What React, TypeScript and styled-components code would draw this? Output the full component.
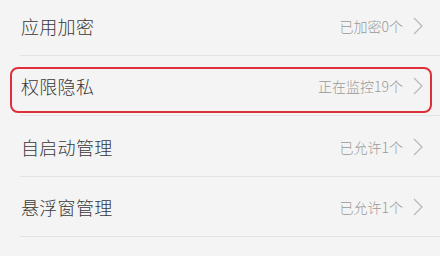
import React from "react";
import styled, { createGlobalStyle } from "styled-components";

const GlobalStyle = createGlobalStyle`
	html, body {
		margin: 0;
		padding: 0;
		background: #f4f4f4;
	}
	body {
		font-family: "Noto Sans CJK SC", "Noto Sans", sans-serif;
	}
`;

const ITEMS: { title: string; status: string; active?: boolean }[] = [
	{ title: "应用加密", status: "已加密0个" },
	{ title: "权限隐私", status: "正在监控19个", active: true },
	{ title: "自启动管理", status: "已允许1个" },
	{ title: "悬浮窗管理", status: "已允许1个" },
];

const Chevron = () => (
	<svg width="10" height="18" viewBox="0 0 10 18" fill="none">
		<path d="M1 1 L9 9 L1 17" stroke="#b8b8b8" strokeWidth="1.2" />
	</svg>
);

export default function App() {
	return (
		<>
			<GlobalStyle />
			<Page>
				<List>
					{ITEMS.map(({ title, status, active }) => (
						<Row key={title}>
							{active && <Highlight />}
							<Title>{title}</Title>
							<Status>{status}</Status>
							<Chevron />
						</Row>
					))}
				</List>
			</Page>
		</>
	);
}

const Page = styled.div`
	width: 440px;
	height: 256px;
	overflow: hidden;
	background: #f4f4f4;
`;

const List = styled.div`
	margin-top: -5px;
	display: flex;
	flex-direction: column;
`;

const Row = styled.div`
	position: relative;
	height: 60.5px;
	box-sizing: border-box;
	display: flex;
	align-items: center;
	padding: 1px 17px 0 21px;

	&::after {
		content: "";
		position: absolute;
		left: 20px;
		right: 0;
		bottom: 0;
		height: 1px;
		background: #e4e4e4;
	}
`;

const Highlight = styled.div`
	position: absolute;
	top: 11px;
	bottom: 3px;
	left: 10px;
	right: 8px;
	border: 2px solid #de2f3b;
	border-radius: 8px;
	pointer-events: none;
	z-index: 1;
`;

const Title = styled.span`
	flex: 1;
	font-size: 18px;
	font-weight: 300;
	color: #383838;
	letter-spacing: 0.3px;
`;

const Status = styled.span`
	font-size: 14px;
	font-weight: 300;
	color: #999999;
	margin-right: 10px;
`;
